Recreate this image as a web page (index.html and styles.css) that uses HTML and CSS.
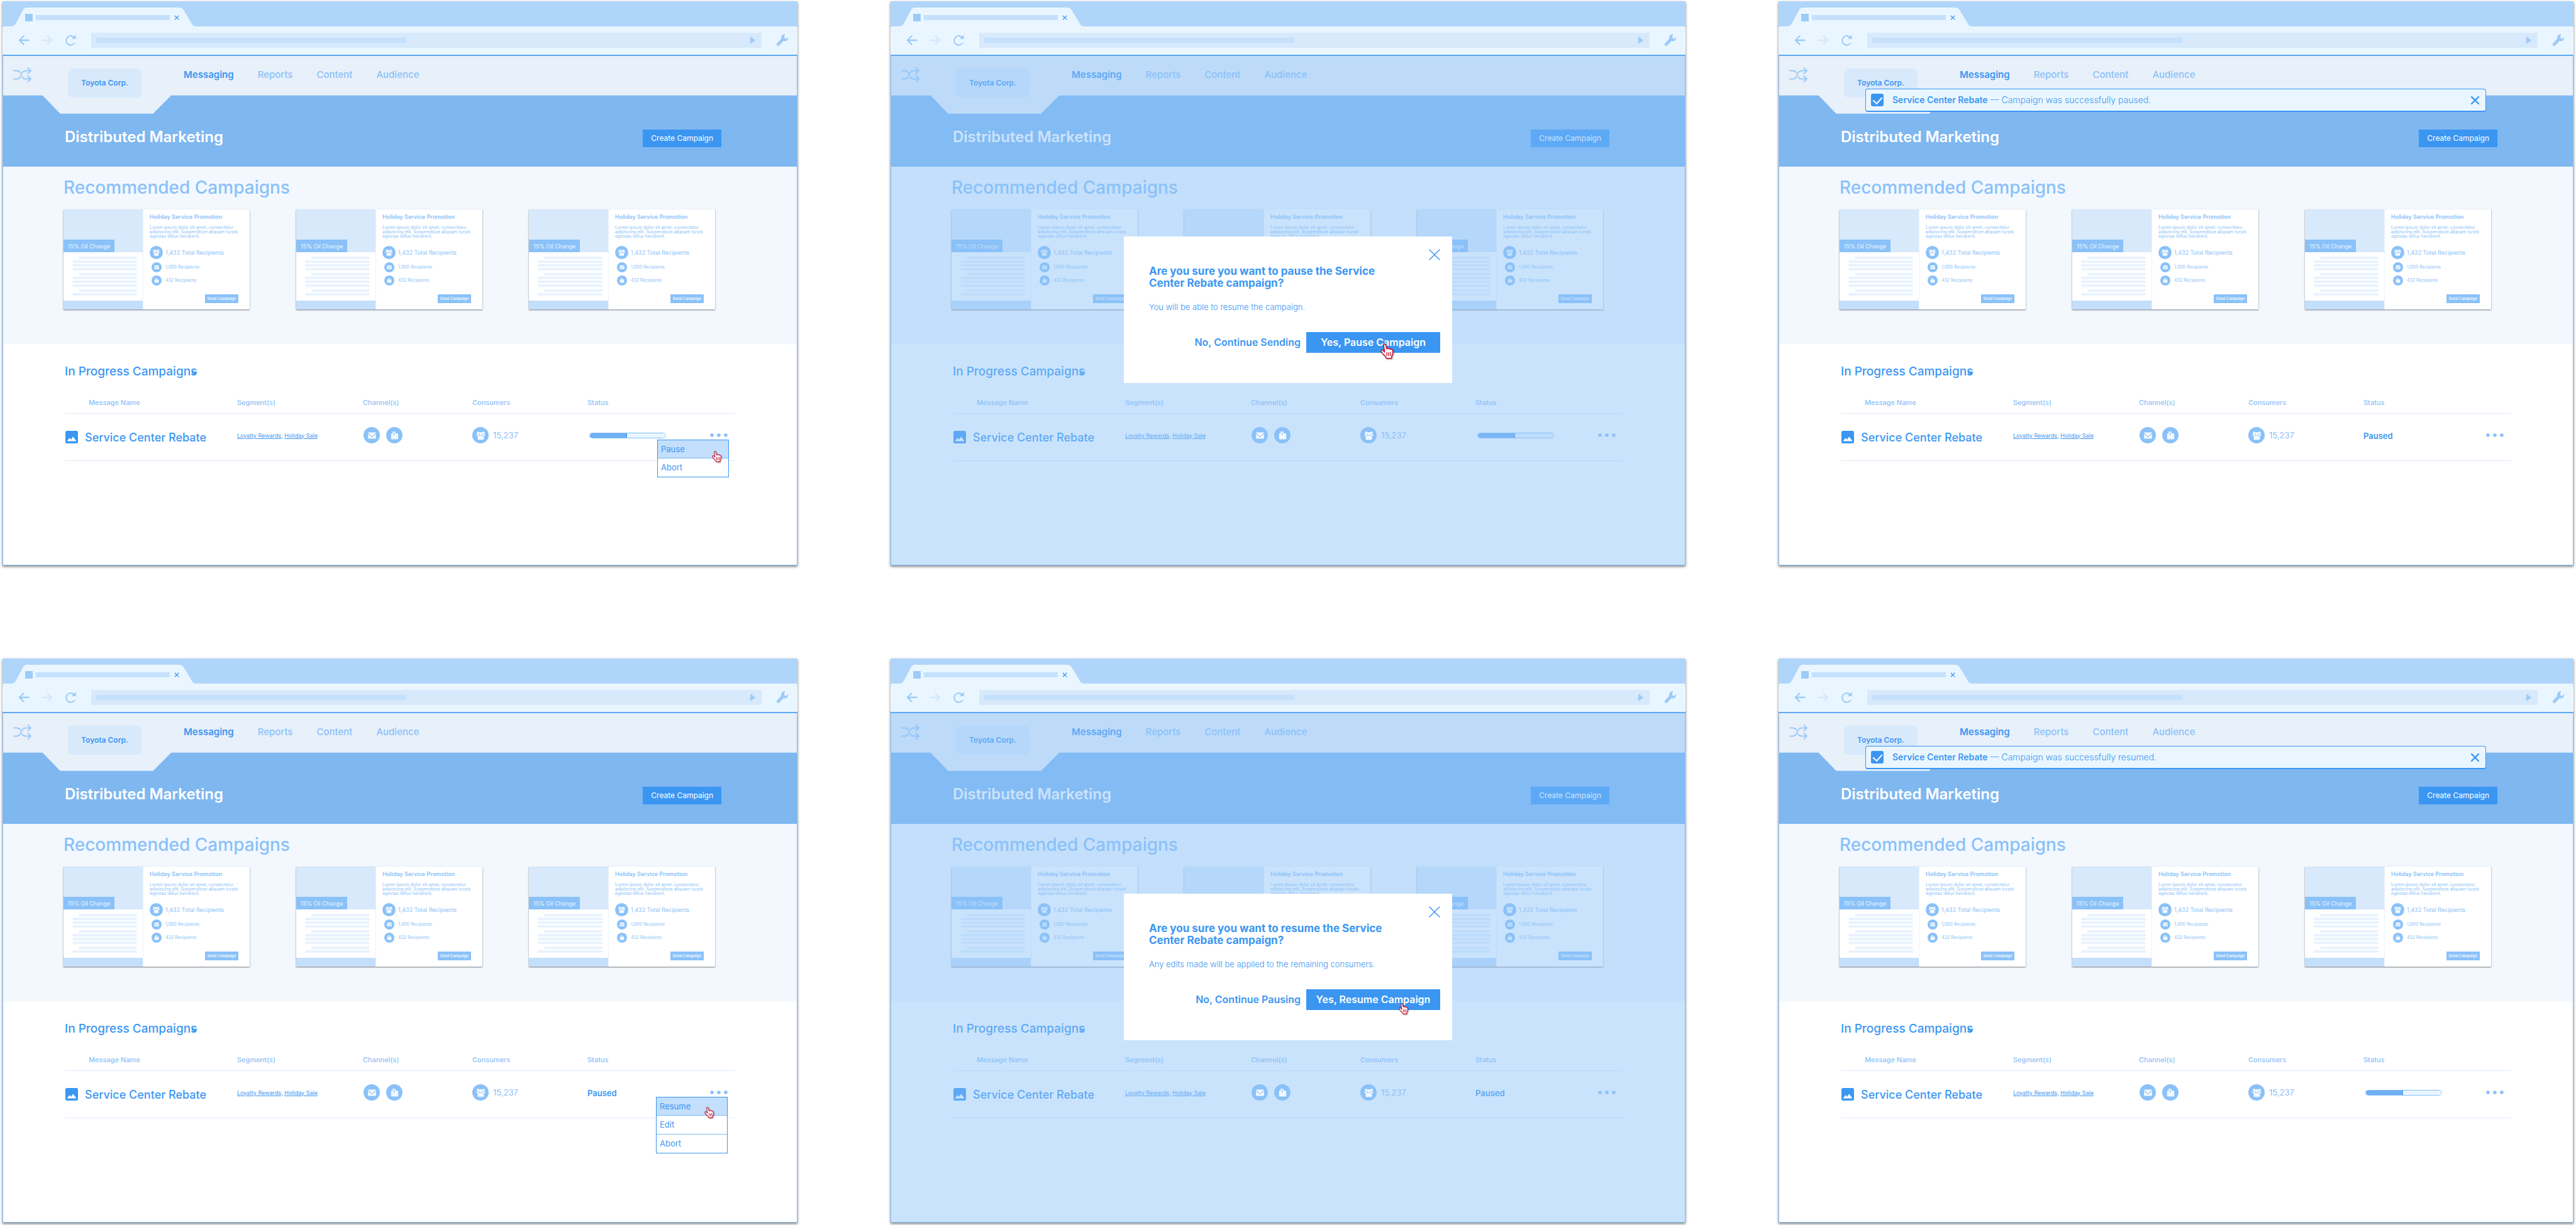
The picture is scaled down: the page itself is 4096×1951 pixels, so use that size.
FILE: index.html
```html
<!DOCTYPE html>
<html lang="en">
<head>
<meta charset="utf-8">
<meta name="viewport" content="width=device-width, initial-scale=1">
<title>Distributed Marketing – pause and resume flow</title>
<link rel="stylesheet" href="styles.css">
</head>
<body>
<svg class="sprite" aria-hidden="true">
  <symbol id="tab-shape" viewBox="0 0 298 30"><path fill="#eaf6ff" d="M0 30c5 0 8-2 10-6L20 5c2-4 4-5 7-5h242c3 0 5 1 7 4l12 20c2 4 4 6 10 6z"/></symbol>
  <symbol id="arrow" viewBox="0 0 18 16"><path fill="none" stroke="currentColor" stroke-width="2.4" stroke-linecap="round" d="M16.5 8H2M8.5 1.5L2 8l6.500 6.500"/></symbol>
  <symbol id="reload" viewBox="0 0 18 18"><path fill="none" stroke="currentColor" stroke-width="2" d="M15.800 13.200A7.300 7.300 0 1 1 14.500 4"/><path fill="currentColor" d="M17.500 0v7h-6.500z"/></symbol>
  <symbol id="wrench" viewBox="0 0 20 20"><path fill="currentColor" d="M14.500.5a5.300 5.300 0 0 0-6.200 7L1.600 14.600a2.500 2.500 0 0 0 3.700 3.600l6.600-7.200a5.300 5.300 0 0 0 7.400-5.900l-2.800 2.600-2.800-.8-.8-2.800z"/></symbol>
  <symbol id="shuffle" viewBox="0 0 29 24"><path fill="none" stroke="currentColor" stroke-width="2" stroke-linecap="round" stroke-linejoin="round" d="M1 5.500h4.500c4 0 5 1.500 6 3M1 18.500h4.500C15 18.500 10 5.500 20 5.500h7.500M14.500 15.500c1 2 2.500 3 5.500 3h7.500M23.500 1l4.500 4.500L23.500 10M23.500 14l4.500 4.500-4.500 4.500"/></symbol>
  <symbol id="notch" viewBox="0 0 206 30"><path fill="#e8f0fa" d="M0 0h206l-29 29H28z"/><path fill="none" stroke="#c5e0fb" d="M28 29.500h149"/></symbol>
  <symbol id="people" viewBox="0 0 24 24"><g fill="currentColor"><circle cx="6" cy="6" r="3"/><circle cx="18" cy="6" r="3"/><circle cx="12" cy="8" r="3.800"/><path d="M2 12.500c0-2 1-3.300 3-3.300h2c.4 2 1.200 3 2.300 3.800H2zM22 12.500c0-2-1-3.300-3-3.300h-2c-.4 2-1.200 3-2.300 3.800H22zM5 20v-3.500c0-2.500 1.500-3.800 4-3.800h6c2.500 0 4 1.300 4 3.800V20c0 1-.7 1.700-1.700 1.700H6.700C5.700 21.700 5 21 5 20z"/></g></symbol>
  <symbol id="mail" viewBox="0 0 24 24"><path fill="currentColor" d="M3 6.500C3 5.500 3.700 5 4.500 5h15c.8 0 1.500.5 1.500 1.500L12 14zM3 8.500l9 7.500 9-7.500v9c0 1-.7 1.500-1.500 1.500h-15c-.8 0-1.500-.5-1.500-1.500z"/></symbol>
  <symbol id="mailbox" viewBox="0 0 24 24"><path fill="currentColor" d="M7.500 3H14v4.500h4.500c1 0 1.500.6 1.500 1.500v10c0 1-.6 1.500-1.500 1.500h-13c-1 0-1.500-.5-1.500-1.500V9c0-.9.5-1.500 1.500-1.500h2zM9.800 6v6h1.400V7.500H13V6z"/></symbol>
  <symbol id="image" viewBox="0 0 20 20"><rect width="20" height="20" rx="2.500" fill="currentColor"/><path fill="#fff" d="M2.500 16.500L6.500 11.300l2.300 2.800 3.500-4.900 5.200 7.300z"/></symbol>
  <symbol id="cross" viewBox="0 0 18 18"><path fill="none" stroke="currentColor" stroke-width="1.500" d="M.7.7l16.600 16.600M17.300.7L.7 17.300"/></symbol>
  <symbol id="cross-bold" viewBox="0 0 16 16"><path fill="none" stroke="currentColor" stroke-width="2.400" d="M1.500 1.500l13 13M14.500 1.500l-13 13"/></symbol>
  <symbol id="dots" viewBox="0 0 28 6"><g fill="currentColor"><circle cx="3" cy="3" r="2.800"/><circle cx="14" cy="3" r="2.800"/><circle cx="25" cy="3" r="2.800"/></g></symbol>
  <symbol id="caret" viewBox="0 0 10 6"><path fill="none" stroke="currentColor" stroke-width="2" d="M1 1l4 4 4-4"/></symbol>
  <symbol id="hand" viewBox="0 0 22 25"><path fill="#fff" stroke="#c8102e" stroke-width="1.500" stroke-linejoin="round" d="M5 2.800C4.800 1 7.400.4 8 2.200l2.300 6.600c.3-1.300 3-1.400 3.300.2.800-1 3-.7 3.100.8 1-.7 2.800-.2 2.800 1.400.3 2.800.5 5.600-.9 7.800l-.9 2.600-.3 2.200H9.400l-.6-2.200L3.200 16C1.500 14 .6 11.600 1.600 10.800c1.300-.9 2.600.3 3.800 2l1.400 1z"/><path stroke="#c8102e" stroke-width="1.300" d="M10.300 14v6M13.200 14v6M16 14v6"/></symbol>
</svg>
<main class="board" id="board"></main>
<script src="board.js"></script>
</body>
</html>
```
FILE: styles.css
```css
:root {
  --blue: #3b96f2;
  --mid: #8ac1f8;
  --rule: #ddecfb;
  --pale: #d7e9fb;
  --glass: #eaf6ff;
}

* { box-sizing: border-box; }

body {
  margin: 0;
  background: #fff;
  color: var(--blue);
  font-family: Inter, "Liberation Sans", sans-serif;
}

h2, h3, h4, p, ul { margin: 0; padding: 0; }
ul { list-style: none; }
a { color: inherit; text-decoration: none; }
svg { display: block; }

button {
  margin: 0;
  padding: 0;
  border: 0;
  background: none;
  color: inherit;
  font: inherit;
  white-space: nowrap;
  cursor: pointer;
}

.sprite { position: absolute; width: 0; height: 0; }

.board {
  display: grid;
  grid-template-columns: repeat(3, minmax(0, 1fr));
  gap: 148px;
  padding: 2px 4px 4px;
}

/* Browser chrome */
.browser {
  display: flex;
  flex-direction: column;
  background: #b0d5fa;
  box-shadow: 0 2px 4px rgba(0, 0, 0, .5);
}

.tabs { padding: 10px 12px 0; }

.tab {
  position: relative;
  display: flex;
  align-items: center;
  width: 298px;
  height: 30px;
  padding: 2px 29px 0 24px;
}

.tab-shape { position: absolute; inset: 0; width: 298px; height: 30px; }
.favicon { position: relative; width: 12px; height: 12px; margin-right: 5px; background: #9dcbf8; }
.tab-title { position: relative; flex: 1; height: 8px; margin-right: 7px; background: #c5e0fb; }
.tab-close { position: relative; }
.tab-close svg { width: 8px; height: 8px; }

.toolbar {
  display: flex;
  align-items: center;
  padding: 10px 14px 11px 25px;
  border-bottom: 2px solid #5ba8f5;
  border-radius: 3px 3px 0 0;
  background: var(--glass);
  color: #9dcbf8;
}

.toolbar button svg { width: 18px; height: 18px; }
.toolbar .forward { margin: 0 19px; color: #d3e8fc; transform: scaleX(-1); }
.toolbar .wrench svg { width: 20px; height: 20px; }

.address {
  display: flex;
  flex: 1;
  align-items: center;
  justify-content: space-between;
  height: 24px;
  margin: 0 23px 0 24px;
  padding: 0 10px 0 8px;
  background: var(--pale);
}

.address-text { width: 47%; height: 8px; background: #c5e0fb; }
.address-go { border: solid transparent; border-width: 6px 0 6px 8px; border-left-color: #9dcbf8; }

/* Application */
.app {
  position: relative;
  flex: 1;
  border: 1px solid #7fbcf7;
  border-top: 0;
  background: #fff;
}

.masthead {
  position: relative;
  display: flex;
  align-items: flex-start;
  height: 63px;
  padding-left: 16px;
  border-bottom: 1px solid #c5e0fb;
  background: #e8f0fa;
}

.shuffle { margin-top: 18px; color: #9dcbf8; }
.shuffle svg { width: 29px; height: 24px; }
.notch { position: absolute; left: 62px; top: 62px; width: 206px; height: 30px; }

.brand {
  position: relative;
  width: 117px;
  margin: 20px 67px 0 58px;
  padding: 13px 0;
  border-radius: 8px;
  background: var(--pale);
  font-size: 12px;
  font-weight: 600;
  line-height: 20px;
  text-align: center;
}

.main-nav {
  display: flex;
  gap: 38px;
  margin-top: 20px;
  color: var(--mid);
  font-size: 15px;
  font-weight: 500;
  line-height: 20px;
}

.main-nav .current { color: var(--blue); font-weight: 600; }

.banner {
  display: flex;
  align-items: flex-start;
  justify-content: space-between;
  padding: 54px 120px 31px 98px;
  background: #7fb7f0;
  color: #fff;
}

.banner h2 { font-size: 24px; font-weight: 600; line-height: 24px; }

.create {
  padding: 0 13px;
  background: var(--blue);
  font-size: 12px;
  line-height: 28px;
}

/* Recommended campaigns */
.recommended { padding: 15px 130px 55px 96px; background: #f3f8ff; }

.recommended h3 {
  margin-bottom: 17px;
  color: var(--mid);
  font-size: 28px;
  font-weight: 500;
  line-height: 36px;
}

.cards { display: grid; grid-template-columns: repeat(3, minmax(0, 1fr)); gap: 74px; }

.card {
  display: flex;
  background: #fff;
  color: var(--mid);
  box-shadow: 0 1px 2px rgba(0, 0, 0, .5);
}

.preview {
  display: flex;
  flex-direction: column;
  width: 127px;
  border-right: 1px solid #eaf3fd;
}

.hero { padding-top: 48px; background: var(--pale); }

.offer {
  display: inline-block;
  padding: 2px 7px 0;
  background: var(--mid);
  color: #eaf6ff;
  font-size: 9px;
  line-height: 18px;
  vertical-align: top;
}

.copy { display: grid; gap: 2px; padding: 7px 9px 8px 14px; }
.copy i { height: 4px; border-radius: 2px; background: #e8f3fe; }
.copy .indent { margin-left: 10px; }
.copy .indent:not(:first-child) { margin-top: 2px; }
.preview-foot { flex: 1; background: #c3dffc; }

.summary {
  display: flex;
  flex: 1;
  flex-direction: column;
  align-items: flex-start;
  padding: 6px 0 10px 10px;
}

.summary h4 { font-size: 9px; font-weight: 600; line-height: 12px; }
.summary p { margin: 7px 0 12px; font-size: 7px; line-height: 7px; white-space: nowrap; }

.counts { display: grid; gap: 5px; font-size: 7px; line-height: 16px; }
.counts li { display: grid; grid-template-columns: 21px auto; align-items: center; gap: 4px; }
.counts .total { font-size: 9px; line-height: 21px; }

.badge {
  display: grid;
  place-items: center;
  width: 16px;
  height: 16px;
  margin: 0 auto;
  border-radius: 50%;
  background: var(--mid);
  color: #f3f9ff;
}

.badge svg { width: 10px; height: 10px; }
.total .badge { width: 21px; height: 21px; }
.total .badge svg { width: 13px; height: 13px; }

.send {
  align-self: flex-end;
  margin: 14px 18px 0 0;
  padding: 0 4px;
  background: var(--mid);
  color: #fff;
  font-size: 6px;
  font-weight: 500;
  line-height: 14px;
}

/* In-progress table */
.progress { padding: 32px 98px 165px 98px; }

.progress h3 {
  display: flex;
  align-items: center;
  font-size: 19px;
  font-weight: 500;
  line-height: 24px;
}

.caret { width: 10px; height: 6px; margin: 3px 0 0 -9px; }

.campaigns {
  width: 100%;
  border-collapse: separate;
  border-spacing: 0;
  table-layout: fixed;
}

.col-name { width: 274px; }
.col-segment { width: 200px; }
.col-channel { width: 174px; }
.col-consumer { width: 183px; }
.col-action { width: 65px; }

.campaigns th {
  padding: 29px 0 9px;
  border-bottom: 1px solid var(--rule);
  color: var(--mid);
  font-size: 11px;
  font-weight: 500;
  line-height: 16px;
  text-align: left;
}

.campaigns th:first-child { padding-left: 38px; }

.campaigns td {
  position: relative;
  height: 75px;
  padding: 0 0 6px;
  border-bottom: 1px solid var(--rule);
  vertical-align: middle;
}

.campaigns td.name-cell { padding: 0; }

.name { display: flex; align-items: center; gap: 11px; padding-left: 1px; font-size: 18px; font-weight: 500; }
.name svg { width: 20px; height: 20px; }
.segments { font-size: 9px; white-space: nowrap; }
.segments a { text-decoration: underline; }
.channels { display: flex; gap: 10px; padding-left: 1px; }
.consumers { display: flex; align-items: center; gap: 7px; color: var(--mid); font-size: 13px; font-weight: 400; }

.campaigns .badge { position: relative; z-index: 2; width: 26px; height: 26px; margin: 0; }
.campaigns .badge svg { width: 17px; height: 17px; }

.meter {
  display: block;
  width: 122px;
  height: 9px;
  margin-left: 3px;
  overflow: hidden;
  border: 1px solid #85bff8;
  border-radius: 5px;
  background: var(--glass);
  appearance: none;
}

.meter::-webkit-progress-bar { background: var(--glass); }
.meter::-webkit-progress-value { background: #70b0f4; border-right: 1px solid var(--blue); }

.paused { font-size: 13px; font-weight: 600; }

.more { display: block; margin: 0 12px 0 auto; color: var(--mid); }
.more svg { width: 28px; height: 6px; }

.menu {
  position: absolute;
  z-index: 3;
  top: 41px;
  right: 10px;
  width: 114px;
  border: 1px solid var(--blue);
  background: #fff;
  font-size: 13px;
}

.menu li + li { border-top: 1px solid #7fbcf7; }
.menu button { display: block; width: 100%; padding: 0 5px; line-height: 29px; text-align: left; }
.menu li:first-child button { background: #c3dffc; line-height: 28px; }
.menu-long { right: 12px; }

/* Pointer drawn over the pressed control */
.hand { position: absolute; width: 16px; height: 18px; filter: drop-shadow(1px 1px 1px rgba(0, 0, 0, .4)); }
.menu .hand { left: 86px; top: 17px; }
.menu-long .hand { left: 76px; top: 15px; }
.dialog .hand { left: 437px; top: 174px; }
.dialog .hand-large { left: 408px; top: 170px; width: 22px; height: 25px; }

/* Confirmation dialog */
.scrim {
  position: absolute;
  z-index: 1;
  inset: 0;
  display: flex;
  align-items: flex-start;
  justify-content: center;
  padding-top: 287px;
  background: rgba(138, 194, 249, .45);
}

.dialog {
  position: relative;
  width: 522px;
  padding: 20px 19px 48px 40px;
  background: #fff;
}

.dialog-head { display: flex; align-items: flex-start; justify-content: space-between; }
.dialog-head h3 { padding-top: 26px; font-size: 17px; font-weight: 700; line-height: 19px; }
.dialog-head svg { width: 18px; height: 18px; }
.dialog p { margin: 19px 0 31px; font-size: 13px; font-weight: 300; line-height: 18px; }
.actions { display: flex; justify-content: flex-end; gap: 9px; font-size: 16px; font-weight: 600; line-height: 33px; }
.confirm { width: 213px; background: var(--blue); color: #fff; }

/* Toast */
.toast {
  position: absolute;
  top: 52px;
  left: 137px;
  right: 138px;
  display: flex;
  align-items: center;
  gap: 14px;
  padding: 7px 9px 7px 8px;
  border: 1px solid var(--blue);
  border-bottom-width: 2px;
  border-radius: 4px;
  background: var(--glass);
  font-size: 14px;
  font-weight: 300;
  line-height: 20px;
}

.toast strong { font-weight: 600; }
.toast button { margin-left: auto; }
.toast svg { width: 15px; height: 15px; }

.tick {
  display: grid;
  place-items: center;
  width: 20px;
  height: 20px;
  margin: 0;
  border-radius: 3px;
  background: var(--blue);
  appearance: none;
}

.tick::after {
  width: 7px;
  height: 12px;
  margin-top: -3px;
  border: solid #fff;
  border-width: 0 2px 2px 0;
  content: "";
  transform: rotate(42deg);
}
```
FILE: board.js
```js
// Each entry is one step of the flow, in reading order.
const steps = [
  { status: 'sending', menu: ['Pause', 'Abort'] },
  {
    status: 'sending',
    dialog: {
      title: 'Are you sure you want to pause the Service<br>Center Rebate campaign?',
      text: 'You will be able to resume the campaign.',
      cancel: 'No, Continue Sending', confirm: 'Yes, Pause Campaign', hand: 'hand hand-large'
    }
  },
  { status: 'paused', toast: 'paused' },
  { status: 'paused', menu: ['Resume', 'Edit', 'Abort'] },
  {
    status: 'paused',
    dialog: {
      title: 'Are you sure you want to resume the Service<br>Center Rebate campaign?',
      text: 'Any edits made will be applied to the remaining consumers.',
      cancel: 'No, Continue Pausing', confirm: 'Yes, Resume Campaign', hand: 'hand'
    }
  },
  { status: 'sending', toast: 'resumed' }
];

const icon = (id, cls = '') => `<svg class="${cls}" aria-hidden="true"><use href="#${id}"/></svg>`;
const badge = id => `<span class="badge">${icon(id)}</span>`;

const card = `
  <article class="card">
    <div class="preview">
      <div class="hero"><span class="offer">15% Oil Change</span></div>
      <div class="copy">
        <i class="indent"></i><i></i><i></i><i></i>
        <i class="indent"></i><i></i><i></i><i></i>
        <i class="indent"></i><i></i>
      </div>
      <div class="preview-foot"></div>
    </div>
    <div class="summary">
      <h4>Holiday Service Promotion</h4>
      <p>Lorem ipsum dolor sit amet, consectetur<br>adipiscing elit. Suspendisse aliquam turpis<br>egestas tellus hendrerit.</p>
      <ul class="counts">
        <li class="total">${badge('people')}1,432 Total Recipients</li>
        <li>${badge('mail')}1,000 Recipients</li>
        <li>${badge('mailbox')}432 Recipients</li>
      </ul>
      <button class="send" type="button">Send Campaign</button>
    </div>
  </article>`;

const menu = items => `
  <div class="menu ${items.length > 2 ? 'menu-long' : ''}">
    <ul>${items.map(item => `<li><button type="button">${item}</button></li>`).join('')}</ul>
    ${icon('hand', 'hand')}
  </div>`;

const dialog = d => `
  <div class="scrim">
    <section class="dialog" role="dialog">
      <div class="dialog-head">
        <h3>${d.title}</h3>
        <button type="button" aria-label="Close">${icon('cross')}</button>
      </div>
      <p>${d.text}</p>
      <div class="actions">
        <button type="button">${d.cancel}</button>
        <button class="confirm" type="button">${d.confirm}</button>
      </div>
      ${icon('hand', d.hand)}
    </section>
  </div>`;

const toast = result => `
  <div class="toast" role="status">
    <input class="tick" type="checkbox" checked aria-label="Done">
    <span><strong>Service Center Rebate</strong> — Campaign was successfully ${result}.</span>
    <button type="button" aria-label="Dismiss">${icon('cross-bold')}</button>
  </div>`;

const status = {
  sending: '<progress class="meter" max="100" value="49" aria-label="Sent"></progress>',
  paused: '<span class="paused">Paused</span>'
};

const screen = step => `
  <article class="browser">
    <div class="tabs">
      <div class="tab">
        ${icon('tab-shape', 'tab-shape')}
        <span class="favicon"></span><span class="tab-title"></span>
        <button class="tab-close" type="button" aria-label="Close tab">${icon('cross-bold')}</button>
      </div>
    </div>
    <div class="toolbar">
      <button type="button" aria-label="Back">${icon('arrow')}</button>
      <button class="forward" type="button" aria-label="Forward">${icon('arrow')}</button>
      <button type="button" aria-label="Reload">${icon('reload')}</button>
      <div class="address"><span class="address-text"></span><span class="address-go"></span></div>
      <button class="wrench" type="button" aria-label="Settings">${icon('wrench')}</button>
    </div>
    <div class="app">
      <header class="masthead">
        ${icon('notch', 'notch')}
        <button class="shuffle" type="button" aria-label="Switch account">${icon('shuffle')}</button>
        <div class="brand">Toyota Corp.</div>
        <nav class="main-nav">
          <a class="current" href="#">Messaging</a><a href="#">Reports</a><a href="#">Content</a><a href="#">Audience</a>
        </nav>
      </header>
      <div class="banner">
        <h2>Distributed Marketing</h2>
        <button class="create" type="button">Create Campaign</button>
      </div>
      <section class="recommended">
        <h3>Recommended Campaigns</h3>
        <div class="cards">${card.repeat(3)}</div>
      </section>
      <section class="progress">
        <h3>In Progress Campaigns${icon('caret', 'caret')}</h3>
        <table class="campaigns">
          <colgroup><col class="col-name"><col class="col-segment"><col class="col-channel"><col class="col-consumer"><col><col class="col-action"></colgroup>
          <thead>
            <tr><th>Message Name</th><th>Segment(s)</th><th>Channel(s)</th><th>Consumers</th><th>Status</th><th></th></tr>
          </thead>
          <tbody>
            <tr>
              <td class="name-cell"><div class="name">${icon('image')}Service Center Rebate</div></td>
              <td class="segments"><a href="#">Loyalty Rewards,</a> <a href="#">Holiday Sale</a></td>
              <td><div class="channels">${badge('mail')}${badge('mailbox')}</div></td>
              <td><div class="consumers">${badge('people')}15,237</div></td>
              <td>${status[step.status]}</td>
              <td><button class="more" type="button" aria-label="More actions">${icon('dots')}</button>${step.menu ? menu(step.menu) : ''}</td>
            </tr>
          </tbody>
        </table>
      </section>
      ${step.dialog ? dialog(step.dialog) : ''}
      ${step.toast ? toast(step.toast) : ''}
    </div>
  </article>`;

document.getElementById('board').innerHTML = steps.map(screen).join('');
```
